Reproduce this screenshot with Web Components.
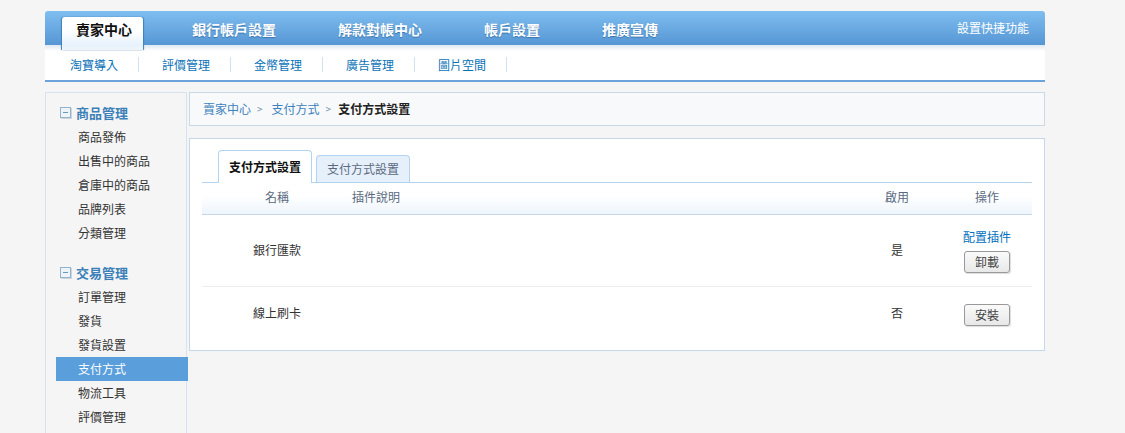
<!DOCTYPE html>
<html lang="zh-Hant"><head><meta charset="utf-8"><style>
html,body{margin:0;height:433px;overflow:hidden;background:#f5f5f5}
body{font:12px/1 "Noto Sans CJK TC","Liberation Sans",sans-serif;color:#333}
</style></head><body>
<shop-page></shop-page>
<script>
function def(name,html){customElements.define(name,class extends HTMLElement{constructor(){super();this.attachShadow({mode:'open'}).innerHTML=html}})}
def('top-nav',`<style>
:host{display:block;width:1000px}
.bar{height:34px;border-radius:3px 3px 0 0;background:linear-gradient(#7fbef0,#5696d4);display:flex;align-items:flex-start;position:relative;padding-left:17px;box-sizing:border-box}
.a{height:29px;margin-top:6px;line-height:25px;font-size:14px;font-weight:700;color:#fff;margin-left:62px;text-shadow:0 1px 1px #3b75ad}
.a.on{margin-left:0;width:81px;box-sizing:border-box;padding-left:14px;height:33px;border-radius:3px 3px 0 0;background:linear-gradient(#fff 40%,#e6f2fc 85%,#f0f5fa);color:#111;text-shadow:none;position:relative;z-index:1;box-shadow:-1px 0 1px -0.5px #3f7fba,1px 0 1px -0.5px #3f7fba}
.a.on+.a{margin-left:49px}
.q{position:absolute;right:16px;top:11px;color:#fff;font-size:12px}
.sub{height:27px;padding:6px 0 2px 1px;background:linear-gradient(#dfe8f1,#fff 6px);border-bottom:2px solid #6ca3da;display:flex;align-items:center}
.s{color:#0b72b8;padding:0 20px 0 24px;line-height:15px;border-right:1px solid #d3e2f0}
.s:not(:first-child){padding-left:23px}
</style><div class="bar"><span class="a on">賣家中心</span><span class="a">銀行帳戶設置</span><span class="a">解款對帳中心</span><span class="a">帳戶設置</span><span class="a">推廣宣傳</span><span class="q">設置快捷功能</span></div>
<div class="sub"><span class="s">淘寶導入</span><span class="s">評價管理</span><span class="s">金幣管理</span><span class="s">廣告管理</span><span class="s">圖片空間</span></div>`);
def('side-group',`<style>
:host{display:block;margin-bottom:15px}
h3{margin:0 0 0 14px;height:24px;padding-bottom:1px;display:flex;align-items:center;gap:5px;font-size:13px;font-weight:700;color:#3b80b8}
i{width:9px;height:9px;border:1px solid #8fb4cc;background:#eef3f7;box-shadow:1px 1px 0 #ccd6dc;position:relative}
i:after{content:"";position:absolute;left:2px;right:2px;top:4px;height:1px;background:#6d99b8}
</style><h3><i></i><slot name="title"></slot></h3><slot></slot>`);
def('side-item',`<style>
:host{display:block;height:24px;line-height:24px;margin-left:10px;margin-right:-2px;padding-left:22px;color:#333}
:host([on]){background:#5a9fdc;color:#fff}
</style><slot></slot>`);
def('side-bar',`<style>
:host{display:block;width:142px;height:345px;box-sizing:border-box;border:solid #d5e3f0;border-width:1px 1px 0 1px;padding-top:7px}
</style><slot></slot>`);
def('bread-crumb',`<style>
:host{display:flex;align-items:center;height:34px;box-sizing:border-box;border:1px solid #c9d9e6;background:#f8f9fb;padding-left:13px;color:#3c82bd}
span{margin:0 6px 0 6px;font-size:10px;color:#6f8fa8}
b{color:#222;font-weight:700;margin-left:1px}
</style>賣家中心<span>&gt;</span><em style="font-style:normal;margin-left:3px;margin-right:0">支付方式</em><span>&gt;</span><b>支付方式設置</b>`);
def('pay-tabs',`<style>
:host{display:flex;align-items:flex-end;height:44px;box-sizing:border-box;margin:0 12px;padding-left:16px;gap:4px;border-bottom:1px solid #b4d2f2}
div{width:94px;box-sizing:border-box;text-align:center;border:1px solid #b4d2f2;border-bottom:0;border-radius:4px 4px 0 0}
.on{height:33px;line-height:31px;background:#fff;font-weight:700;color:#111;margin-bottom:-1px}
.off{height:27px;line-height:25px;background:#e6f0fb;color:#5a6a80}
</style><div class="on">支付方式設置</div><div class="off">支付方式設置</div>`);
def('pay-row',`<style>
:host{display:grid;grid-template-columns:150px 500px 90px 90px;margin:0 12px;align-items:center;box-sizing:border-box;color:#333;border-bottom:1px solid #eee}
:host([head]){height:32px;padding-bottom:4px;color:#5a6a80;background:linear-gradient(#fff 40%,#eef5fd);border-bottom:1px solid #c5d8ea}
:host(.r1){height:72px;padding-bottom:2px}
:host(.r2){height:52px;border-bottom:0}
</style><slot></slot>`);
def('cfg-button',`<style>
:host{display:block;width:46px;height:22px;box-sizing:border-box;line-height:20px;text-align:center;margin:0 auto;border:1px solid #999;border-radius:3px;background:linear-gradient(#fafafa,#e8e8e8);box-shadow:1px 1px 1px #ddd;color:#444}
</style><slot></slot>`);
def('pay-panel',`<style>
:host{display:block;height:213px;box-sizing:border-box;border:1px solid #c5d8ea;background:#fff;margin-top:12px}
</style><slot></slot>`);
def('shop-page',`<style>
:host{display:block;width:1000px;margin:11px 0 0 45px}
.body{display:flex;gap:2px;margin-top:10px}
.main{flex:1;min-width:0}
</style><slot name="nav"></slot><div class="body"><slot name="side"></slot><div class="main"><slot name="main"></slot></div></div>`);
const page=document.querySelector('shop-page');
page.innerHTML=`<top-nav slot="nav"></top-nav>
<side-bar slot="side">
<side-group><span slot="title">商品管理</span><side-item>商品發佈</side-item><side-item>出售中的商品</side-item><side-item>倉庫中的商品</side-item><side-item>品牌列表</side-item><side-item>分類管理</side-item></side-group>
<side-group><span slot="title">交易管理</span><side-item>訂單管理</side-item><side-item>發貨</side-item><side-item>發貨設置</side-item><side-item on>支付方式</side-item><side-item>物流工具</side-item><side-item>評價管理</side-item></side-group>
</side-bar>
<bread-crumb slot="main"></bread-crumb>
<pay-panel slot="main"><pay-tabs></pay-tabs>
<pay-row head><span style="padding-left:63px">名稱</span><span>插件說明</span><span style="text-align:center">啟用</span><span style="text-align:center">操作</span></pay-row>
<pay-row class="r1"><span style="padding-left:51px">銀行匯款</span><span></span><span style="text-align:center">是</span><div style="text-align:center;padding-top:5px"><div style="color:#0070c0;margin-bottom:8px">配置插件</div><cfg-button>卸載</cfg-button></div></pay-row>
<pay-row class="r2"><span style="padding-left:51px">線上刷卡</span><span></span><span style="text-align:center">否</span><div style="padding-top:4px"><cfg-button>安裝</cfg-button></div></pay-row>
</pay-panel>`;
</script>
</body></html>
